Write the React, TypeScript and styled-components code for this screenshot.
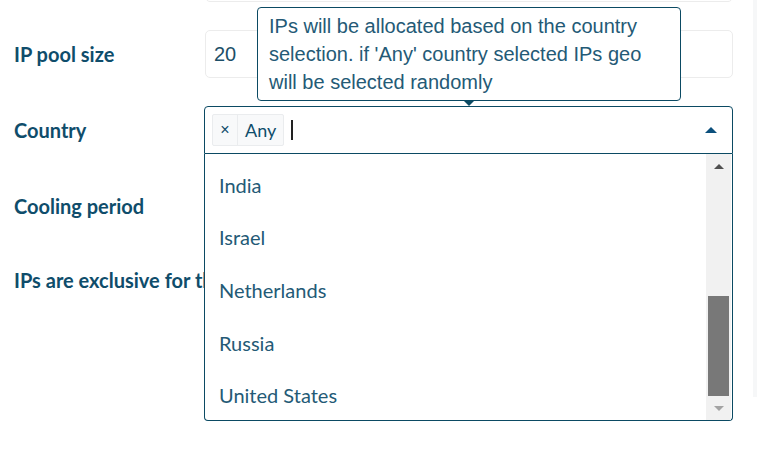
import { useLayoutEffect, useRef } from "react"
import styled, { createGlobalStyle } from "styled-components"

const TEAL = "#0f4d6b"
const BORDER = "#0b4a63"
const ITEM_H = 52.6
const LIST_H = 266
const ARROW_H = 24

const COUNTRIES = [
	"Australia",
	"Brazil",
	"Canada",
	"France",
	"Germany",
	"Hong Kong",
	"India",
	"Israel",
	"Netherlands",
	"Russia",
	"United States"
]

const GlobalStyle = createGlobalStyle`
	html, body {
		margin: 0;
		padding: 0;
		background: #ffffff;
		overflow: hidden;
	}
	body {
		font-family: Lato, "Noto Sans", sans-serif;
	}
`

const Dropdown = () => {
	const scrollRef = useRef<HTMLDivElement>(null)

	useLayoutEffect(() => {
		if (scrollRef.current) scrollRef.current.scrollTop = scrollRef.current.scrollHeight
	}, [])

	const trackLen = LIST_H - ARROW_H * 2
	const thumbH = (trackLen * LIST_H) / (COUNTRIES.length * ITEM_H)

	return (
		<Menu>
			<Options ref={scrollRef}>
				{COUNTRIES.map((c) => (
					<Option key={c}>{c}</Option>
				))}
			</Options>
			<Scrollbar>
				<ScrollArrow $dir="up" />
				<Track>
					<Thumb style={{ height: thumbH }} />
				</Track>
				<ScrollArrow $dir="down" />
			</Scrollbar>
		</Menu>
	)
}

const App = () => {
	return (
		<Page>
			<GlobalStyle />
			<Form>
				<Row $cut>
					<Label />
					<TextInput />
				</Row>
				<Row>
					<Label>IP pool size</Label>
					<TextInput>20</TextInput>
				</Row>
				<Row $front>
					<Label>Country</Label>
					<Field>
						<Tooltip>
							IPs will be allocated based on the country selection. if 'Any' country selected IPs geo will be
							selected randomly
						</Tooltip>
						<SelectBox>
							<Chip>
								<ChipRemove>×</ChipRemove>
								<ChipText>Any</ChipText>
							</Chip>
							<Caret />
							<CaretUp />
						</SelectBox>
						<Dropdown />
					</Field>
				</Row>
				<Row $h={46}>
					<Label>Cooling period</Label>
					<TextInput />
				</Row>
				<Row>
					<Label>IPs are exclusive for this user</Label>
					<TextInput />
				</Row>
			</Form>
			<EdgeStrip />
		</Page>
	)
}

export default App

const Page = styled.div`
	display: flex;
	align-items: flex-start;
	width: 767px;
	height: 453px;
	overflow: hidden;
`

const Form = styled.div`
	display: flex;
	flex-direction: column;
	gap: 28px;
	width: 719px;
	padding-left: 14px;
`

const Row = styled.div<{ $cut?: boolean; $front?: boolean; $h?: number }>`
	display: grid;
	grid-template-columns: 190px 529px;
	align-items: center;
	height: ${(p) => p.$h ?? 48}px;
	margin-top: ${(p) => (p.$cut ? "-46px" : "0")};
	position: relative;
	z-index: ${(p) => (p.$front ? 2 : 1)};
`

const Label = styled.div`
	font-family: Lato, "Noto Sans", sans-serif;
	font-weight: 700;
	font-size: 20px;
	color: ${TEAL};
	white-space: nowrap;
`

const TextInput = styled.div`
	box-sizing: border-box;
	height: 48px;
	margin-left: 1px;
	border: 1px solid #ececec;
	border-radius: 5px;
	padding-left: 8px;
	display: flex;
	align-items: center;
	font-family: "Liberation Sans", Arial, sans-serif;
	font-size: 20px;
	color: #1d4f68;
	background: #ffffff;
`

const Field = styled.div`
	position: relative;
	height: 48px;
`

const Tooltip = styled.div`
	position: absolute;
	left: 53px;
	bottom: calc(100% + 5px);
	box-sizing: border-box;
	width: 424px;
	padding: 4px 11px;
	border: 1px solid ${BORDER};
	border-radius: 4px;
	background: #ffffff;
	font-family: "Liberation Sans", Arial, sans-serif;
	font-size: 20px;
	line-height: 28px;
	color: #245a76;
	z-index: 3;

	&::after {
		content: "";
		position: absolute;
		left: 205px;
		top: 100%;
		border-left: 6px solid transparent;
		border-right: 6px solid transparent;
		border-top: 6px solid ${BORDER};
	}
`

const SelectBox = styled.div`
	box-sizing: border-box;
	height: 48px;
	display: flex;
	align-items: center;
	padding: 0 15px 0 7px;
	border: 1px solid ${BORDER};
	border-radius: 4px 4px 0 0;
	background: #ffffff;
`

const Chip = styled.div`
	display: flex;
	align-items: stretch;
	height: 32px;
	box-sizing: border-box;
	border: 1px solid #eaecee;
	border-radius: 2px;
	background: #f8f9fa;
`

const ChipRemove = styled.span`
	display: flex;
	align-items: center;
	justify-content: center;
	width: 24px;
	border-right: 1px solid #eaecee;
	font-family: "Liberation Sans", Arial, sans-serif;
	font-size: 16px;
	color: ${TEAL};
`

const ChipText = styled.span`
	display: flex;
	align-items: center;
	padding: 0 7px;
	font-family: Lato, sans-serif;
	font-size: 18px;
	color: ${TEAL};
`

const Caret = styled.span`
	width: 2px;
	height: 20px;
	margin-left: 7px;
	background: #222222;
`

const CaretUp = styled.span`
	margin-left: auto;
	width: 0;
	height: 0;
	border-left: 6px solid transparent;
	border-right: 6px solid transparent;
	border-bottom: 6px solid #0b4f7c;
`

const Menu = styled.div`
	position: absolute;
	top: 100%;
	left: 0;
	right: 0;
	box-sizing: border-box;
	height: ${LIST_H + 1}px;
	display: flex;
	border: 1px solid ${BORDER};
	border-top: none;
	border-radius: 0 0 4px 4px;
	background: #ffffff;
`

const Options = styled.div`
	flex: 1;
	height: ${LIST_H}px;
	overflow-y: auto;
	scrollbar-width: none;

	&::-webkit-scrollbar {
		display: none;
	}
`

const Option = styled.div`
	box-sizing: border-box;
	height: ${ITEM_H}px;
	display: flex;
	align-items: center;
	padding: 4px 0 0 14px;
	font-family: Lato, sans-serif;
	font-size: 20px;
	color: #245a76;
`

const Scrollbar = styled.div`
	width: 25px;
	margin-right: 1px;
	height: ${LIST_H}px;
	display: flex;
	flex-direction: column;
	background: #f1f1f1;
`

const ScrollArrow = styled.div<{ $dir: "up" | "down" }>`
	height: ${ARROW_H}px;
	display: flex;
	align-items: center;
	justify-content: center;

	&::before {
		content: "";
		border-left: 5px solid transparent;
		border-right: 5px solid transparent;
		${(p) =>
			p.$dir === "up" ? "border-bottom: 5px solid #505050;" : "border-top: 5px solid #a3a3a3;"}
	}
`

const Track = styled.div`
	flex: 1;
	display: flex;
	flex-direction: column;
	justify-content: flex-end;
`

const Thumb = styled.div`
	margin: 0 2px;
	background: #787878;
`

const EdgeStrip = styled.div`
	width: 4px;
	height: 397px;
	margin-left: 20px;
	background: #f6f7f8;
`
